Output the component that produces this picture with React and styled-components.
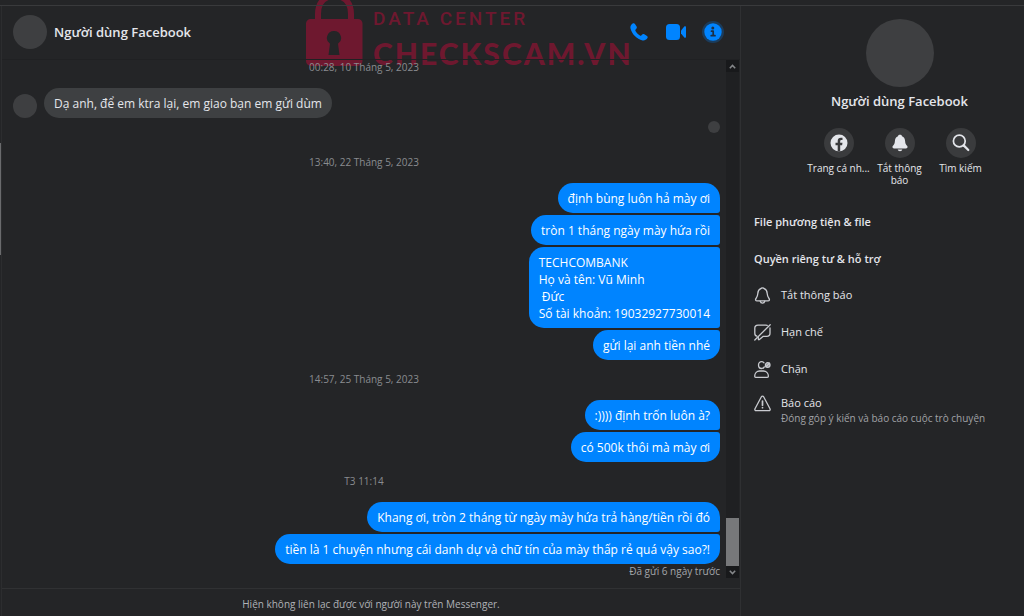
import React from "react";
import styled, { createGlobalStyle } from "styled-components";

const GlobalStyle = createGlobalStyle`
  * {
    box-sizing: border-box;
  }

  body {
    margin: 0;
    background-color: #242527;
    color: #e4e6eb;
    font-family: "Open Sans", "Noto Sans", sans-serif;
    overflow: hidden;
  }

  h1, h2, h3, p, ul {
    margin: 0;
    padding: 0;
  }

  ul {
    list-style: none;
  }

  button {
    padding: 0;
    border: none;
    background: none;
    color: inherit;
    font: inherit;
    cursor: pointer;
  }

  svg {
    display: block;
  }
`;

const Page = styled.div`
  min-height: 100vh;
  padding-top: 5px;
  display: flex;
  flex-direction: column;
  position: relative;
`;

const Columns = styled.div`
  flex: 1;
  display: grid;
  grid-template-columns: 2px minmax(0, 1fr) 284px;
  border-top: 1px solid #393a3c;
`;

const Rail = styled.div`
  padding-top: 137px;
  border-right: 1px solid #2c2d2f;
`;

const RailThumb = styled.div`
  height: 112px;
  background-color: #6a6b6d;
`;

const Chat = styled.main`
  display: flex;
  flex-direction: column;
  position: relative;
`;

const ChatHeader = styled.header`
  height: 54px;
  padding: 0 16px 1px 11px;
  display: flex;
  align-items: center;
  border-bottom: 1px solid #202123;
`;

const Avatar = styled.div`
  flex: none;
  width: ${({ $size }) => $size}px;
  height: ${({ $size }) => $size}px;
  border-radius: 50%;
  background-color: #3e3f41;
`;

const ChatTitle = styled.h1`
  flex: 1;
  margin-left: 7px;
  font-size: 13px;
  line-height: 18px;
  font-weight: 600;
`;

const HeaderActions = styled.div`
  display: flex;
  align-items: center;
  gap: 15px;
`;

const IconButton = styled.button`
  width: 22px;
  height: 22px;
  display: flex;
  align-items: center;
  justify-content: center;
  border-radius: 50%;
  color: #0084ff;
  background-color: ${({ $active }) => ($active ? "#1b3c5c" : "transparent")};
`;

const ThreadRow = styled.div`
  flex: 1;
  display: flex;
  padding-bottom: 10px;
`;

const Thread = styled.div`
  flex: 1;
  padding-right: 6px;
`;

const Stamp = styled.time`
  display: block;
  padding-left: 6px;
  margin: ${({ $top }) => $top}px 0 14px;
  text-align: center;
  color: #8a8c90;
  font-size: 10px;
  line-height: 14px;
`;

const Incoming = styled.div`
  display: flex;
  align-items: flex-end;
  gap: 7px;
  padding-left: 11px;
`;

const Group = styled.ul`
  display: flex;
  flex-direction: column;
  align-items: flex-end;
  gap: 2px;
`;

const Bubble = styled.li`
  padding: 7px 10px 6px;
  border-radius: 15px;
  background-color: #0084ff;
  color: #fff;
  font-size: 12px;
  line-height: 17px;
  white-space: pre-line;

  &:not(:first-child) {
    border-top-right-radius: 3px;
  }

  &:not(:last-child) {
    border-bottom-right-radius: 3px;
  }
`;

const IncomingBubble = styled.p`
  padding: 7px 10px 6px;
  border-radius: 15px;
  background-color: #3e4042;
  font-size: 12px;
  line-height: 17px;
`;

const Seen = styled.div`
  display: flex;
  justify-content: flex-end;
  padding-top: 3px;
`;

const SentNote = styled.p`
  text-align: right;
  color: #a5a7ab;
  font-size: 10px;
  line-height: 14px;
`;

const Scrollbar = styled.div`
  width: 13px;
  margin-right: 1px;
  display: flex;
  flex-direction: column;
  background-color: #1f2022;
`;

const ScrollArrow = styled.button`
  width: 13px;
  height: 12px;
  display: flex;
  align-items: center;
  justify-content: center;
  background-color: #18191b;
  color: #85878a;
`;

const ScrollThumb = styled.div`
  height: 48px;
  margin-top: auto;
  background-color: #77787a;
`;

const ChatFooter = styled.footer`
  padding: 8px 0 5px;
  border-top: 1px solid #303133;
  text-align: center;
  color: #b0b3b8;
  font-size: 10px;
  line-height: 14px;
`;

const Panel = styled.aside`
  border-left: 1px solid #2f3032;
  padding: 13px 12px 0 13px;
`;

const Profile = styled.section`
  padding-left: 33px;
  display: flex;
  flex-direction: column;
  align-items: center;
`;

const ProfileName = styled.h2`
  margin-top: 5px;
  font-size: 13px;
  line-height: 18px;
  font-weight: 600;
`;

const Shortcuts = styled.div`
  margin-top: 18px;
  display: flex;
  align-items: flex-start;
  justify-content: center;
`;

const Shortcut = styled.button`
  width: 61px;
  display: flex;
  flex-direction: column;
  align-items: center;
  gap: 4px;
  font-size: 10px;
  line-height: 12px;
`;

const ShortcutIcon = styled.span`
  width: 30px;
  height: 30px;
  display: flex;
  align-items: center;
  justify-content: center;
  border-radius: 50%;
  background-color: #3a3b3d;
`;

const ShortcutLabel = styled.span`
  white-space: ${({ $wrap }) => ($wrap ? "normal" : "nowrap")};
`;

const Sections = styled.div`
  margin-top: 17px;
  display: flex;
  flex-direction: column;
  align-items: flex-start;
`;

const SectionTitle = styled.h3`
  height: 37px;
  display: flex;
  align-items: center;
  font-size: 11px;
  line-height: 16px;
  font-weight: 600;
`;

const Option = styled.button`
  min-height: 37px;
  padding-top: ${({ $tall }) => ($tall ? 7 : 10)}px;
  display: flex;
  align-items: flex-start;
  gap: 10px;
  text-align: left;
  font-size: 11px;
  line-height: 16px;
`;

const OptionText = styled.span`
  display: flex;
  flex-direction: column;
`;

const Hint = styled.small`
  color: #a0a2a6;
  font-size: 10px;
  line-height: 14px;
`;

// lies over the top of the chat, under its text
const Watermark = styled.div`
  position: absolute;
  top: -6px;
  left: 304px;
  display: flex;
  gap: 10px;
  color: #6e182f;
  pointer-events: none;
  z-index: -1;
`;

const WatermarkText = styled.div`
  padding-top: 8px;
  white-space: nowrap;
`;

const WatermarkTop = styled.div`
  font-family: Roboto, sans-serif;
  font-size: 19px;
  line-height: 22px;
  font-weight: 500;
  letter-spacing: 3px;
`;

const WatermarkName = styled.div`
  margin-top: 5px;
  font-family: Lato, sans-serif;
  font-size: 30px;
  line-height: 36px;
  font-weight: 900;
  letter-spacing: 2px;
`;

const LockIcon = () => (
  <svg width="57" height="67" viewBox="0 0 57 67">
    <path
      d="M12 20V14C12 3 18-4 28.500-4S45 3 45 14V20"
      fill="none"
      stroke="currentColor"
      strokeWidth="6"
    />
    <path
      fill="currentColor"
      fillRule="evenodd"
      d="M5 19H52a4.500 4.500 0 0 1 4.500 4.500V61a5 5 0 0 1-5 5H5a5 5 0 0 1-5-5V23.500A4.500 4.500 0 0 1 5 19ZM28 31a7 7 0 0 0-4 12.800L22.500 55h11L32 43.800A7 7 0 0 0 28 31Z"
    />
  </svg>
);

const PhoneIcon = () => (
  <svg width="18" height="18" viewBox="0 0 18 18" fill="currentColor">
    <path d="M2.600.6C3.300.1 4.200 0 4.800.8L6.600 3.600C7 4.300 6.900 5.200 6.300 5.800L5.600 6.600C5.200 7 5.200 7.500 5.500 8C6.500 9.900 8 11.400 9.900 12.500C10.400 12.800 10.900 12.800 11.300 12.400L12.100 11.600C12.700 11 13.600 10.900 14.300 11.300L17 13.100C17.800 13.600 17.900 14.600 17.300 15.300C16 16.900 14.600 17.800 12.600 17.400C6.800 16 1.900 11 .5 5.400C0 3.500.9 1.800 2.600.6Z" />
  </svg>
);

const VideoIcon = () => (
  <svg width="20" height="16" viewBox="0 0 20 16" fill="currentColor">
    <rect width="14" height="16" rx="3.500" />
    <path d="M15 6.500 18.300 2.600C18.900 1.900 20 2.200 20 3.200V12.800C20 13.800 18.900 14.100 18.300 13.400L15 9.500Z" />
  </svg>
);

const InfoIcon = () => (
  <svg width="18" height="18" viewBox="0 0 18 18">
    <circle cx="9" cy="9" r="8.700" fill="currentColor" />
    <circle cx="8.800" cy="5" r="1.500" fill="#1b2f45" />
    <path
      d="M7.500 8.200H9.200V12.500M7.200 12.700H11"
      fill="none"
      stroke="#1b2f45"
      strokeWidth="1.700"
      strokeLinecap="round"
      strokeLinejoin="round"
    />
  </svg>
);

const Chevron = ({ down }) => (
  <svg width="7" height="5" viewBox="0 0 7 5" fill="none">
    <path
      d={down ? "M.8.8 3.500 3.600 6.200.8" : "M.8 4.200 3.500 1.400 6.200 4.200"}
      stroke="currentColor"
      strokeWidth="1.500"
    />
  </svg>
);

const FacebookIcon = () => (
  <svg width="18" height="18" viewBox="0 0 18 18">
    <circle cx="9" cy="9" r="8.500" fill="#e4e6eb" />
    <path
      d="M7.700 17.500V11.300H5.500V8.800H7.700V7C7.700 4.800 9 3.700 10.900 3.700C11.700 3.700 12.500 3.800 12.500 3.800V5.900H11.500C10.500 5.900 10.200 6.500 10.200 7.200V8.800H12.500L12.100 11.300H10.200V17.500Z"
      fill="#3a3b3d"
    />
  </svg>
);

const BellSolidIcon = () => (
  <svg width="16" height="18" viewBox="0 0 16 18" fill="#e4e6eb">
    <path d="M8 .8C9 .8 9.800 1.300 10 2.200C12 3 13 4.700 13.100 7C13.200 9.500 13.700 10.400 15 11.800C16.100 13 15.400 14.400 14 14.400H2C.6 14.400-.1 13 1 11.800C2.300 10.400 2.800 9.500 2.900 7C3 4.700 4 3 6 2.200C6.200 1.300 7 .8 8 .8Z" />
    <path d="M5.700 15.600H10.300C10 16.700 9.200 17.200 8 17.200S6 16.700 5.700 15.600Z" />
  </svg>
);

const SearchIcon = () => (
  <svg width="18" height="18" viewBox="0 0 18 18" fill="none" stroke="#e4e6eb">
    <circle cx="7.300" cy="7" r="5.900" strokeWidth="1.700" />
    <path d="M11.700 11.400 16.300 16" strokeWidth="2.200" strokeLinecap="round" />
  </svg>
);

const LineIcon = ({ children }) => (
  <svg
    width="17"
    height="17"
    viewBox="0 0 17 17"
    fill="none"
    stroke="#c9cbd0"
    strokeWidth="1.300"
    strokeLinecap="round"
    strokeLinejoin="round"
  >
    {children}
  </svg>
);

const BellIcon = () => (
  <LineIcon>
    <path d="M6.800 1.700C7.200.5 9.800.5 10.200 1.700C12.100 2.500 13.100 4.200 13.200 6.500C13.300 8.900 13.800 9.900 15 11.500C15.900 12.700 15.300 13.900 14 13.900H3C1.700 13.900 1.100 12.700 2 11.500C3.200 9.900 3.700 8.900 3.800 6.500C3.900 4.200 4.900 2.500 6.800 1.700Z" />
    <path d="M6.200 14.200C6.500 15.600 7.200 16.200 8.500 16.200S10.500 15.600 10.800 14.200" />
  </LineIcon>
);

const RestrictIcon = () => (
  <LineIcon>
    <path d="M.8 16 16.200.8" />
    <path d="M13.200 1.300C12.700 1.200 12.200 1.200 11.700 1.200H4C2 1.200.8 2.400.8 4.300V9.200C.8 10.800 1.500 11.900 2.900 12.200" />
    <path d="M16 4V9.200C16 11.100 14.800 12.300 12.800 12.300H9.300L5.400 15.500C4.800 16 4.300 15.700 4.300 15V13.500" />
  </LineIcon>
);

const BlockIcon = () => (
  <LineIcon>
    <path d="M10 1.800C9.400 1 8.600.7 7.600.7C5.700.7 4.500 2 4.500 3.900C4.500 6 5.700 7.500 7.600 7.500C8.900 7.500 9.800 6.900 10.300 5.900" />
    <circle cx="13.700" cy="4" r="2.300" fill="#8d8f93" />
    <path d="M12 5.700 15.400 2.300" />
    <path d="M1.700 16.300H13.300C14 16.300 14.400 15.900 14.400 15.200C14.400 12 12 10 9.500 10H5.500C3 10 .7 12 .7 15.200C.7 15.900 1.100 16.300 1.700 16.300Z" />
  </LineIcon>
);

const ReportIcon = () => (
  <LineIcon>
    <path d="M7.400 1.700C7.900.8 9.100.8 9.600 1.700L16 13.700C16.500 14.700 15.900 15.700 14.800 15.700H2.200C1.100 15.700.5 14.700 1 13.700Z" />
    <path d="M8.500 6V10.200M8.500 12.500V12.700" strokeWidth="1.700" />
  </LineIcon>
);

const options = [
  { label: "Tắt thông báo", Icon: BellIcon },
  { label: "Hạn chế", Icon: RestrictIcon },
  { label: "Chặn", Icon: BlockIcon },
  {
    label: "Báo cáo",
    Icon: ReportIcon,
    hint: "Đóng góp ý kiến và báo cáo cuộc trò chuyện",
  },
];

const thread = [
  {
    time: "13:40, 22 Tháng 5, 2023",
    top: 22,
    messages: [
      "định bùng luôn hả mày ơi",
      "tròn 1 tháng ngày mày hứa rồi",
      "TECHCOMBANK\nHọ và tên: Vũ Minh\n\u00a0Đức\nSố tài khoản: 19032927730014",
      "gửi lại anh tiền nhé",
    ],
  },
  {
    time: "14:57, 25 Tháng 5, 2023",
    top: 12,
    messages: [":)))) định trốn luôn à?", "có 500k thôi mà mày ơi"],
  },
  {
    time: "T3 11:14",
    top: 12,
    messages: [
      "Khang ơi, tròn 2 tháng từ ngày mày hứa trả hàng/tiền rồi đó",
      "tiền là 1 chuyện nhưng cái danh dự và chữ tín của mày thấp rẻ quá vậy sao?!",
    ],
  },
];

const ChatColumn = () => (
  <Chat>
    <Watermark>
      <LockIcon />
      <WatermarkText>
        <WatermarkTop>DATA CENTER</WatermarkTop>
        <WatermarkName>CHECKSCAM.VN</WatermarkName>
      </WatermarkText>
    </Watermark>
    <ChatHeader>
      <Avatar $size={34} />
      <ChatTitle>Người dùng Facebook</ChatTitle>
      <HeaderActions>
        <IconButton aria-label="Gọi thoại">
          <PhoneIcon />
        </IconButton>
        <IconButton aria-label="Gọi video">
          <VideoIcon />
        </IconButton>
        <IconButton aria-label="Thông tin" $active>
          <InfoIcon />
        </IconButton>
      </HeaderActions>
    </ChatHeader>
    <ThreadRow>
      <Thread>
        <Stamp $top={0}>00:28, 10 Tháng 5, 2023</Stamp>
        <Incoming>
          <Avatar $size={24} />
          <IncomingBubble>Dạ anh, để em ktra lại, em giao bạn em gửi dùm</IncomingBubble>
        </Incoming>
        <Seen>
          <Avatar $size={12} />
        </Seen>
        {thread.map(({ time, top, messages }) => (
          <React.Fragment key={time}>
            <Stamp $top={top}>{time}</Stamp>
            <Group>
              {messages.map((text) => (
                <Bubble key={text}>{text}</Bubble>
              ))}
            </Group>
          </React.Fragment>
        ))}
        <SentNote>Đã gửi 6 ngày trước</SentNote>
      </Thread>
      <Scrollbar>
        <ScrollArrow aria-label="Cuộn lên">
          <Chevron />
        </ScrollArrow>
        <ScrollThumb />
        <ScrollArrow aria-label="Cuộn xuống">
          <Chevron down />
        </ScrollArrow>
      </Scrollbar>
    </ThreadRow>
    <ChatFooter>Hiện không liên lạc được với người này trên Messenger.</ChatFooter>
  </Chat>
);

const InfoPanel = () => (
  <Panel>
    <Profile>
      <Avatar $size={68} />
      <ProfileName>Người dùng Facebook</ProfileName>
      <Shortcuts>
        <Shortcut>
          <ShortcutIcon>
            <FacebookIcon />
          </ShortcutIcon>
          <ShortcutLabel>Trang cá nh...</ShortcutLabel>
        </Shortcut>
        <Shortcut>
          <ShortcutIcon>
            <BellSolidIcon />
          </ShortcutIcon>
          <ShortcutLabel $wrap>Tắt thông báo</ShortcutLabel>
        </Shortcut>
        <Shortcut>
          <ShortcutIcon>
            <SearchIcon />
          </ShortcutIcon>
          <ShortcutLabel>Tìm kiếm</ShortcutLabel>
        </Shortcut>
      </Shortcuts>
    </Profile>
    <Sections>
      <SectionTitle>File phương tiện &amp; file</SectionTitle>
      <SectionTitle>Quyền riêng tư &amp; hỗ trợ</SectionTitle>
      {options.map(({ label, Icon, hint }) => (
        <Option key={label} $tall={Boolean(hint)}>
          <Icon />
          <OptionText>
            {label}
            {hint && <Hint>{hint}</Hint>}
          </OptionText>
        </Option>
      ))}
    </Sections>
  </Panel>
);

const App = () => (
  <>
    <GlobalStyle />
    <Page>
      <Columns>
        <Rail>
          <RailThumb />
        </Rail>
        <ChatColumn />
        <InfoPanel />
      </Columns>
    </Page>
  </>
);

export default App;
